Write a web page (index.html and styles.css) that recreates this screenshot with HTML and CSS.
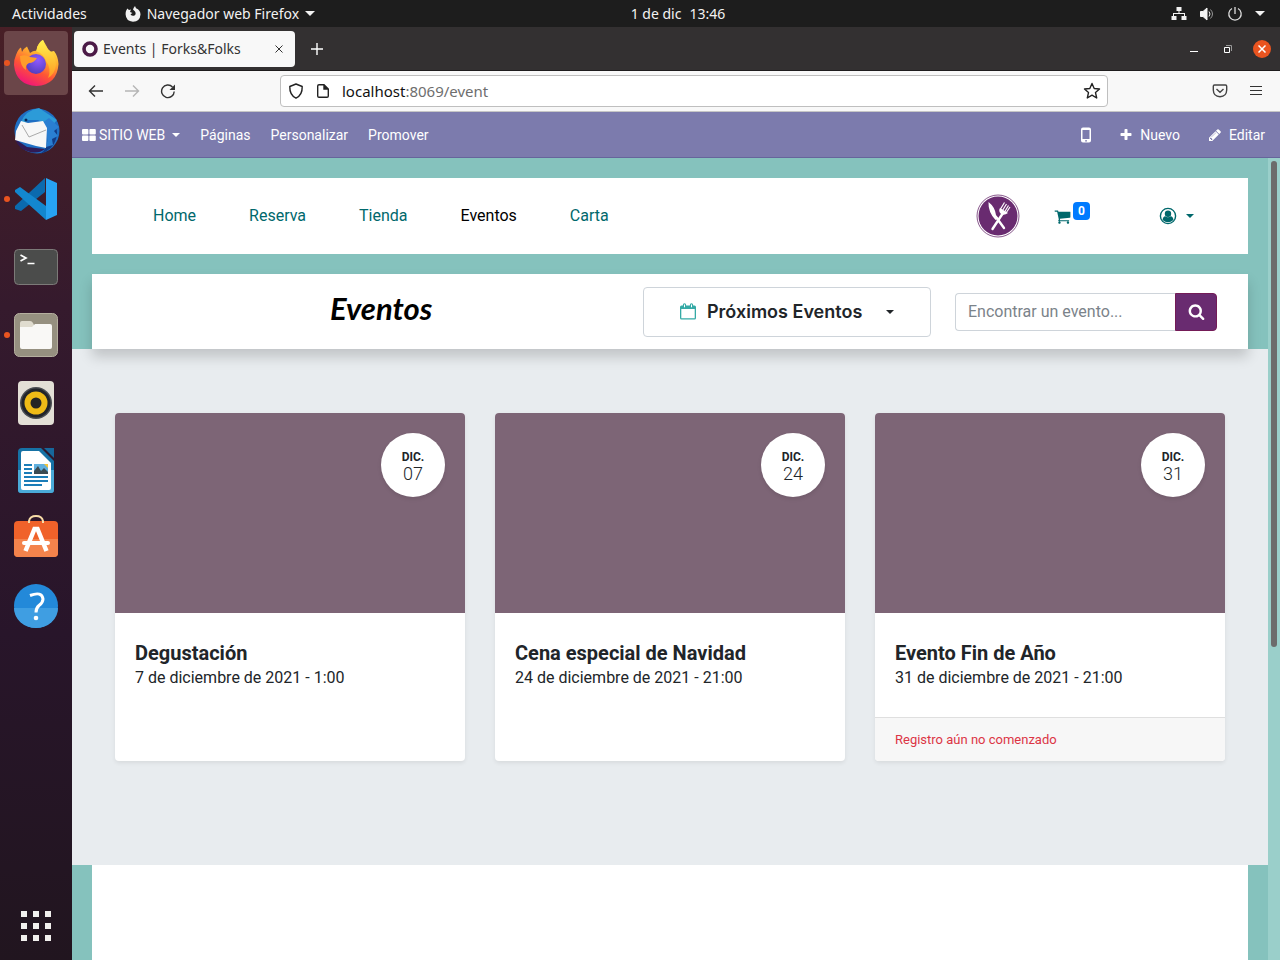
FILE: index.html
```html
<!DOCTYPE html>
<html lang="es">
<head>
<meta charset="utf-8">
<title>Events | Forks&amp;Folks</title>
<link rel="stylesheet" href="styles.css">
</head>
<body>
<header class="topbar">
  <div class="topbar-left">
    <button class="plain">Actividades</button>
    <button class="plain app-menu">
      <svg width="16" height="16" viewBox="0 0 16 16"><path fill="#f2f2f2" d="M1 5L2.300 2.500 4 4 6 3.500 5 6 7.500 7 5.500 8.300Q7 10.500 9.500 9.500 11.500 8 10 5.500L8 3.500Q8.500 1.500 10 0L11 2.300Q15.500 4 15.500 8.500 15 15.500 8 15.700 1 15.300.600 8.500Q.500 6.500 1 5Z"/></svg>
      <span>Navegador web Firefox</span><i class="caret"></i>
    </button>
  </div>
  <div class="clock"><span>1 de dic</span><span>13:46</span></div>
  <div class="tray">
    <svg width="16" height="16" viewBox="0 0 16 16" fill="#f2f2f2"><path d="M5.500 1h5v4h-2v2H14v3h1.500v4h-5v-4H13V8H3v2h2.500v4h-5v-4H2V7h5.500V5h-2z"/></svg>
    <svg width="16" height="16" viewBox="0 0 16 16" fill="none" stroke="#f2f2f2"><path fill="#f2f2f2" d="M1.500 5.500h2.500L8 2v12l-4-3.500H1.500z"/><path d="M10 5.500q2 2.500 0 5"/><path stroke="#999" d="M11.500 3.500q4 4.500 0 9"/></svg>
    <svg width="16" height="16" viewBox="0 0 16 16" fill="none" stroke="#ddd" stroke-width="1.300"><path d="M8 1v7M5 2.500a6.200 6.200 0 1 0 6 0"/></svg>
    <i class="caret"></i>
  </div>
</header>

<div class="desktop">
  <nav class="dock" aria-label="Aplicaciones">
    <button class="app current running" aria-label="Firefox">
      <svg width="48" height="48" viewBox="0 0 48 48">
        <defs>
          <linearGradient id="fx" x1=".8" y1="0" x2=".3" y2="1"><stop offset="0" stop-color="#fff44f"/><stop offset=".35" stop-color="#ffb02e"/><stop offset=".65" stop-color="#ff5634"/><stop offset="1" stop-color="#f0127c"/></linearGradient>
          <radialGradient id="globe" cx=".6" cy=".3" r=".8"><stop offset="0" stop-color="#9059ff"/><stop offset="1" stop-color="#4a3bb8"/></radialGradient>
          <linearGradient id="tail" x1="0" y1="0" x2="0" y2="1"><stop offset="0" stop-color="#fff34d"/><stop offset="1" stop-color="#ff9a22"/></linearGradient>
        </defs>
        <path fill="url(#fx)" d="M4 16Q6 10 9 8.500L10 13Q12 9 15 7.500L18 14Q22 11 25 12L25 8Q28 2 31 1L35 8 37 13 42 12Q46 17 46.500 25 45 46 24.500 47 4 46 2 26 2 20 4 16Z"/>
        <circle cx="24" cy="25" r="10" fill="url(#globe)"/>
        <path fill="url(#tail)" d="M24 12Q26 4 31 1 32 6 36 10 44 16 44 26 43 35 36 39 40 30 34 22 32 15 24 12Z"/>
        <path fill="#ff9d2b" d="M8 17Q14 15 18 18L25 19Q22 24 17 24 13 26 14 31 8 27 8 17Z"/>
      </svg>
    </button>
    <button class="app" aria-label="Thunderbird">
      <svg width="48" height="48" viewBox="0 0 48 48">
        <circle cx="25" cy="24" r="22.500" fill="#1f6fc4"/>
        <path fill="#123a85" d="M36 12Q48 19 44 32 41 43 28 47 35 42 35 35L38 22Z"/>
        <path fill="#2c9bd8" d="M9 15Q14 3 27 1L45 13 39 20 26 13 16 13 9 20Z"/>
        <path fill="#2a7fd2" d="M37 11L47 20 42 24 46 29 40 32 41 38 34 40Q38 27 30 16Z"/>
        <path fill="#301b55" d="M3 32L15 40 33 42Q27 47 18 45 7 43 3 32Z"/>
        <path fill="#f7f7f7" d="M9 14L16 16 31 14 35 21 34 41 24 39 3 33 4 24Z"/>
        <path fill="none" stroke="#aaa" d="M10 18L17 30 34 23"/><circle cx="14" cy="13" r="1.500" fill="#08295a"/>
      </svg>
    </button>
    <button class="app running" aria-label="Visual Studio Code">
      <svg width="48" height="48" viewBox="0 0 48 48">
        <path fill="#0b6aae" d="M3 31L33 3V17L9 36 3 34Z"/>
        <path fill="#1387cf" d="M3 15L8 12 34 31V45L3 17Z"/>
        <path fill="#27a3f3" d="M34 3L45 8V40L34 45Z"/>
      </svg>
    </button>
    <button class="app" aria-label="Terminal">
      <svg width="48" height="48" viewBox="0 0 48 48">
        <rect x="2.500" y="6.500" width="43" height="35" rx="4" fill="#4b4c4b" stroke="#7c7a78"/>
        <path fill="none" stroke="#fff" stroke-width="1.700" d="M8.500 12L14 15 8.500 18M15.500 20.500H22.500"/>
      </svg>
    </button>
    <button class="app running" aria-label="Archivos">
      <svg width="48" height="48" viewBox="0 0 48 48">
        <rect x="2.500" y="2.500" width="43" height="43" rx="5" fill="#969080" stroke="#b5af9f"/>
        <path fill="#e0dccf" d="M8 12q0-2 2-2h8q2 0 3 2l1 2H38v14H8z"/>
        <path fill="#f9f8f6" d="M8 16h12l3-3H38q2 0 2 2V36q0 2-2 2H10q-2 0-2-2z"/>
      </svg>
    </button>
    <button class="app" aria-label="Rhythmbox">
      <svg width="48" height="48" viewBox="0 0 48 48">
        <rect x="6" y="2" width="36" height="44" rx="4" fill="#e3dfd6"/>
        <circle cx="24" cy="24" r="16" fill="#4a4d52"/><circle cx="24" cy="24" r="14.500" fill="#22252a"/>
        <circle cx="24" cy="24" r="11.500" fill="#efbb17"/><circle cx="24" cy="24" r="5.500" fill="#242424"/>
      </svg>
    </button>
    <button class="app" aria-label="LibreOffice Writer">
      <svg width="48" height="48" viewBox="0 0 48 48">
        <path fill="#1672a5" d="M10 1H29L42 14V43q0 3-3 3H9q-3 0-3-3V5q0-4 4-4z"/>
        <path fill="#4aaad8" d="M6 23H42V43q0 3-3 3H9q-3 0-3-3z"/>
        <path fill="#fff" d="M11 4H27L39 16V41q0 2-2 2H11q-2 0-2-2V6q0-2 2-2z"/>
        <path fill="#17679b" d="M32 1H42V11Z"/>
        <path stroke="#1b7db8" stroke-width="2" d="M12 18H20M12 22H20M12 26H20M12 30H36M12 34H36M12 38H30"/>
        <rect x="22" y="17" width="14" height="10" fill="#61b1df"/><path fill="#3c4b52" d="M22 27V24L26 19 29 24 32 21 36 25V27Z"/><path fill="#f3c43b" d="M32 17h4v4z"/>
      </svg>
    </button>
    <button class="app" aria-label="Ubuntu Software">
      <svg width="48" height="48" viewBox="0 0 48 48">
        <rect x="2" y="6" width="44" height="36" rx="4" fill="#f0622a"/><path fill="#f4834c" d="M2 24H46V38q0 4-4 4H6q-4 0-4-4z"/>
        <path fill="none" stroke="#f8dca7" stroke-width="2" d="M17 8V6q1-5 7-5t7 5V8"/>
        <path fill="none" stroke="#fff" stroke-width="4.500" d="M13.500 36L22.500 14h3L34.500 36"/><path stroke="#fff" stroke-width="4" stroke-linecap="round" d="M12 28H36"/>
      </svg>
    </button>
    <button class="app" aria-label="Ayuda">
      <svg width="48" height="48" viewBox="0 0 48 48">
        <circle cx="24" cy="23" r="22" fill="#2389d9"/><path fill="#3f9ee2" d="M2 25H46A22 20 0 0 1 2 25Z"/>
        <path fill="none" stroke="#fff" stroke-width="3" d="M18 12.500Q30 8 31 16 31 19.500 27 22.500 24 25 24 29.500"/><circle cx="24" cy="35" r="2.300" fill="#fff"/>
      </svg>
    </button>
    <button class="app grid-button" aria-label="Mostrar aplicaciones">
      <svg width="48" height="48" viewBox="0 0 48 48"><path stroke="#f2f0ee" stroke-width="6" stroke-dasharray="6" d="M9 12H39M9 24H39M9 36H39"/></svg>
    </button>
  </nav>

  <section class="window">
    <div class="tabs">
      <div class="tab">
        <svg width="16" height="16" viewBox="0 0 16 16"><circle cx="8" cy="8" r="6" fill="none" stroke="#4b1a46" stroke-width="3.600"/></svg>
        <span class="tab-title">Events | Forks&amp;Folks</span>
        <button class="plain" aria-label="Cerrar pestaña"><svg width="8" height="8" viewBox="0 0 8 8" stroke="#333"><path d="M.500.500l7 7M7.500.500l-7 7"/></svg></button>
      </div>
      <button class="plain" aria-label="Nueva pestaña"><svg width="12" height="12" viewBox="0 0 12 12" stroke="#fff" stroke-width="1.400"><path d="M6 0v12M0 6h12"/></svg></button>
      <div class="window-buttons">
        <button class="plain" aria-label="Minimizar"><svg width="8" height="8" viewBox="0 0 8 8"><path stroke="#fff" d="M0 6.500h8"/></svg></button>
        <button class="plain" aria-label="Restaurar"><svg width="8" height="8" viewBox="0 0 8 8" fill="none" stroke="#fff"><path d="M.500 2.500h5v5h-5z"/><path stroke="#999" d="M2 .500h5.500V6"/></svg></button>
        <button class="plain close" aria-label="Cerrar"><svg width="8" height="8" viewBox="0 0 8 8" stroke="#fff" stroke-width="1.500"><path d="M.500.500l7 7M7.500.500l-7 7"/></svg></button>
      </div>
    </div>

    <div class="toolbar">
      <div class="nav-buttons">
        <button class="plain" aria-label="Atrás"><svg width="16" height="16" viewBox="0 0 16 16" fill="none" stroke="#333" stroke-width="1.400"><path d="M15 8H1.500M7 2.500L1.500 8 7 13.500"/></svg></button>
        <button class="plain" aria-label="Adelante"><svg width="16" height="16" viewBox="0 0 16 16" fill="none" stroke="#b5b5b5" stroke-width="1.400"><path d="M1 8h13.500M9 2.500L14.500 8 9 13.500"/></svg></button>
        <button class="plain" aria-label="Recargar"><svg width="16" height="16" viewBox="0 0 16 16" fill="none" stroke="#333" stroke-width="1.400"><path d="M14.200 8.500A6.300 6.300 0 1 1 12.500 4"/><path fill="#333" stroke="none" d="M15 1.500v5.500H9.500z"/></svg></button>
      </div>
      <div class="address">
        <svg width="16" height="16" viewBox="0 0 16 16" fill="none" stroke="#222" stroke-width="1.400"><path stroke-linejoin="round" d="M8 1L14.200 3.500Q14.500 12 8 15.200 1.500 12 1.800 3.500Z"/></svg>
        <svg width="16" height="16" viewBox="0 0 16 16" fill="none" stroke="#222" stroke-width="1.400"><path stroke-linejoin="round" d="M9 1.700H4Q2.700 1.700 2.700 3V13Q2.700 14.300 4 14.300H12Q13.300 14.300 13.300 13V6Z"/><path fill="#222" d="M9 1.700V6H13"/></svg>
        <span class="url">localhost<span class="muted">:8069/event</span></span>
        <svg width="18" height="18" viewBox="0 0 18 18" fill="none" stroke="#222" stroke-width="1.400" stroke-linejoin="round"><path d="M9 1.500L11.200 6.500 16.500 7 12.500 10.600 13.700 16 9 13.200 4.300 16 5.500 10.600 1.500 7 6.800 6.500Z"/></svg>
      </div>
      <div class="toolbar-end">
        <button class="plain" aria-label="Pocket"><svg width="16" height="16" viewBox="0 0 16 16" fill="none" stroke="#444" stroke-width="1.400"><path d="M2.500 2H13.500Q14.700 2 14.700 3.300V7Q14.500 13.500 8 13.700 1.500 13.500 1.300 7V3.300Q1.300 2 2.500 2ZM4.500 6L8 9.300 11.500 6"/></svg></button>
        <button class="plain" aria-label="Menú"><svg width="16" height="16" viewBox="0 0 16 16" stroke="#333"><path d="M2 3.500h12M2 7.500h12M2 11.500h12"/></svg></button>
      </div>
    </div>

    <nav class="editor-bar">
      <button class="plain site"><svg width="14" height="12" viewBox="0 0 14 12" fill="#fff"><rect width="6.400" height="5.500" rx="1"/><rect x="7.400" width="6.400" height="5.500" rx="1"/><rect y="6.400" width="6.400" height="5.500" rx="1"/><rect x="7.400" y="6.400" width="6.400" height="5.500" rx="1"/></svg><span>SITIO WEB</span><i class="caret small"></i></button>
      <a href="#">Páginas</a>
      <a href="#">Personalizar</a>
      <a href="#">Promover</a>
      <div class="editor-actions">
        <button class="plain" aria-label="Vista móvil"><svg width="10" height="16" viewBox="0 0 10 16"><path fill="#fff" fill-rule="evenodd" d="M2 .500h6q2 0 2 2v11q0 2-2 2H2q-2 0-2-2v-11q0-2 2-2zM1.500 3v9h7V3zM5 13a.8.800 0 1 0 .1 0z"/></svg></button>
        <button class="plain icon-text"><svg width="14" height="14" viewBox="0 0 1792 1792" fill="#fff"><path d="M1600 736v192q0 40-28 68t-68 28h-416v416q0 40-28 68t-68 28h-192q-40 0-68-28t-28-68v-416h-416q-40 0-68-28t-28-68v-192q0-40 28-68t68-28h416v-416q0-40 28-68t68-28h192q40 0 68 28t28 68v416h416q40 0 68 28t28 68z"/></svg>Nuevo</button>
        <button class="plain icon-text"><svg width="14" height="14" viewBox="0 0 1792 1792" fill="#fff"><path d="M491 1536l91-91-235-235-91 91v107h128v128h107zm523-928q0-22-22-22-10 0-17 7l-542 542q-7 7-7 17 0 22 22 22 10 0 17-7l542-542q7-7 7-17zm-54-192l416 416-832 832h-416v-416zm683 96q0 53-37 90l-166 166-416-416 166-165q36-38 90-38 53 0 91 38l235 234q37 39 37 91z"/></svg>Editar</button>
      </div>
    </nav>

    <div class="viewport">
      <main class="page">
        <header class="site-header">
          <nav class="site-nav">
            <a href="#">Home</a><a href="#">Reserva</a><a href="#">Tienda</a><a href="#" class="active">Eventos</a><a href="#">Carta</a>
          </nav>
          <a href="#" class="logo" aria-label="Forks&amp;Folks">
            <svg width="44" height="44" viewBox="0 0 44 44">
              <circle cx="22" cy="22" r="21" fill="#fff" stroke="#8a5a8e"/><circle cx="22" cy="22" r="19.500" fill="#692b70"/>
              <path stroke="#fff" stroke-width="2.400" stroke-linecap="round" d="M16.500 35L27 19M28 34L20 23"/>
              <path fill="#fff" d="M12.500 8Q19 13 20 21L22 24 19.500 26Q12 18 12.500 8Z"/>
              <path fill="none" stroke="#fff" stroke-width="1.200" d="M28.500 8.500L24.500 15M30.500 10L26.500 16.500M32.500 11.500L28.500 18M34 13L30 19"/>
              <path fill="#fff" d="M24 14L32 19Q28 22 25 20 22 17 24 14Z"/>
            </svg>
          </a>
          <a href="#" class="cart" aria-label="Carrito">
            <svg width="17" height="17" viewBox="0 0 1792 1792" fill="#00686c"><path d="M704 1536q0 52-38 90t-90 38-90-38-38-90 38-90 90-38 90 38 38 90zm896 0q0 52-38 90t-90 38-90-38-38-90 38-90 90-38 90 38 38 90zm128-1088v512q0 24-16.500 42.500t-40.500 21.500l-1044 122q13 60 13 70 0 16-24 64h920q26 0 45 19t19 45-19 45-45 19h-1024q-26 0-45-19t-19-45q0-11 8-31.500t16-36 21.500-40 15.500-29.500l-177-823h-204q-26 0-45-19t-19-45 19-45 45-19h256q16 0 28.500 6.500t19.500 15.500 13 24.500 8 26 5.500 29.500 4.500 26h1201q26 0 45 19t19 45z"/></svg>
            <span class="badge">0</span>
          </a>
          <button class="plain user" aria-label="Usuario">
            <svg width="18" height="18" viewBox="0 0 18 18"><circle cx="9" cy="9" r="7.600" fill="none" stroke="#00686c" stroke-width="1.400"/><circle cx="9" cy="6.800" r="3.200" fill="#00686c"/><path fill="#00686c" d="M3.500 13Q4 9.500 6.300 9.200 9 11.500 11.700 9.200 14 9.500 14.500 13 9 17.500 3.500 13Z"/></svg>
            <i class="caret small"></i>
          </button>
        </header>

        <div class="events-bar">
          <h1>Eventos</h1>
          <button class="filter">
            <svg width="16" height="17" viewBox="0 0 16 17"><path fill="#35aaa6" fill-rule="evenodd" d="M1.500 2.500H2.800Q2.800.300 4.500.300T6.200 2.500H9.800Q9.800.300 11.500.300T13.200 2.500H14.500Q16 2.500 16 4V15Q16 16.500 14.500 16.500H1.500Q0 16.500 0 15V4Q0 2.500 1.500 2.500ZM1.300 6V15.200H14.700V6ZM4 1.500V4.300H5V1.500ZM11 1.500V4.300H12V1.500Z"/></svg>
            <span>Próximos Eventos</span><i class="caret small"></i>
          </button>
          <form class="search">
            <input type="text" placeholder="Encontrar un evento..." aria-label="Encontrar un evento">
            <button type="button" aria-label="Buscar"><svg width="17" height="17" viewBox="0 0 1792 1792" fill="#fff"><path d="M1216 832q0-185-131.500-316.500t-316.500-131.500-316.500 131.500-131.500 316.500 131.500 316.500 316.500 131.500 316.500-131.500 131.500-316.500zm512 832q0 52-38 90t-90 38q-54 0-90-38l-343-342q-179 124-399 124-143 0-273.500-55.500t-225-150-150-225-55.500-273.500 55.500-273.500 150-225 225-150 273.500-55.500 273.500 55.500 225 150 150 225 55.500 273.500q0 220-124 399l343 343q37 37 37 90z"/></svg></button>
          </form>
        </div>

        <section class="events">
          <article class="card">
            <div class="cover"><time class="date"><b>DIC.</b><span>07</span></time></div>
            <div class="card-body"><h2>Degustación</h2><p>7 de diciembre de 2021 - 1:00</p></div>
          </article>
          <article class="card">
            <div class="cover"><time class="date"><b>DIC.</b><span>24</span></time></div>
            <div class="card-body"><h2>Cena especial de Navidad</h2><p>24 de diciembre de 2021 - 21:00</p></div>
          </article>
          <article class="card">
            <div class="cover"><time class="date"><b>DIC.</b><span>31</span></time></div>
            <div class="card-body"><h2>Evento Fin de Año</h2><p>31 de diciembre de 2021 - 21:00</p></div>
            <footer>Registro aún no comenzado</footer>
          </article>
        </section>
        <div class="page-rest"></div>
      </main>
      <div class="scrollbar"><div class="thumb"></div></div>
    </div>
  </section>
</div>
</body>
</html>
```
FILE: styles.css
```css
* { box-sizing: border-box; }
body {
  margin: 0;
  height: 100vh;
  display: flex;
  flex-direction: column;
  overflow: hidden;
  font-family: Roboto, "Liberation Sans", sans-serif;
  font-size: 16px;
  line-height: 24px;
  color: #212529;
}
a { color: inherit; text-decoration: none; }
svg { display: block; flex: none; }
h1, h2, p { margin: 0; }
button { font: inherit; color: inherit; cursor: pointer; }
.plain { display: flex; align-items: center; padding: 0; border: 0; background: none; }
.caret {
  flex: none;
  border: 5px solid transparent;
  border-top-color: currentColor;
  border-bottom: 0;
}
.caret.small { border-width: 4px; border-bottom: 0; }

/* Desktop top bar */
.topbar {
  display: grid;
  grid-template-columns: 1fr auto 1fr;
  align-items: center;
  height: 27px;
  flex: none;
  padding: 0 15px 0 12px;
  background: #1d1d1d;
  color: #f2f2f2;
  font-family: "Noto Sans", sans-serif;
  font-size: 14px;
}
.topbar-left { display: flex; gap: 38px; }
.app-menu { gap: 6px; }
.clock { display: flex; gap: 8px; padding-left: 79px; }
.tray { display: flex; justify-content: flex-end; align-items: center; gap: 12px; }
.desktop { display: flex; flex: 1; min-height: 0; }

/* Dock */
.dock {
  display: flex;
  flex-direction: column;
  gap: 4px;
  flex: none;
  width: 72px;
  padding: 4px 4px 2px;
  background: linear-gradient(#481f26, #351a2d 30%, #28152a 65%, #21151f);
}
.app {
  display: flex;
  align-items: center;
  justify-content: center;
  position: relative;
  height: 64px;
  padding: 0;
  border: 0;
  border-radius: 4px;
  background: none;
}
.app.current { background: #6b4649; }
.app.running::before {
  content: "";
  position: absolute;
  left: 0;
  top: 29px;
  width: 6px;
  height: 6px;
  border-radius: 50%;
  background: #e95420;
}
.grid-button { margin-top: auto; }

/* Browser window */
.window { display: flex; flex-direction: column; flex: 1; min-width: 0; }
.tabs {
  display: flex;
  align-items: center;
  gap: 16px;
  height: 44px;
  flex: none;
  padding: 0 9px 0 2px;
  background: #333031;
  border-bottom: 1px solid #1e1c1d;
}
.tab {
  display: flex;
  align-items: center;
  gap: 5px;
  width: 221px;
  height: 36px;
  padding: 0 12px 0 8px;
  border-radius: 4px;
  background: #f8f8f8;
  color: #333;
  font-family: "Noto Sans", sans-serif;
  font-size: 14px;
}
.tab-title { flex: 1; }
.window-buttons { display: flex; align-items: center; gap: 26px; margin-left: auto; }
.close { justify-content: center; width: 18px; height: 18px; margin-left: -5px; border-radius: 50%; background: #e95420; }
.toolbar {
  display: grid;
  grid-template-columns: 208px minmax(0, 828px) 1fr;
  align-items: center;
  height: 41px;
  flex: none;
  background: #f8f8f8;
  border-bottom: 1px solid #c6c6c6;
}
.nav-buttons { display: flex; gap: 20px; padding-left: 16px; }
.address {
  display: flex;
  align-items: center;
  gap: 11px;
  height: 32px;
  padding: 0 6px 0 7px;
  border: 1px solid #bfbfbf;
  border-radius: 4px;
  background: #fff;
}
.url { flex: 1; color: #111; font-family: "Noto Sans", sans-serif; font-size: 15px; }
.muted { color: #6e6e6e; }
.toolbar-end { display: flex; justify-content: flex-end; gap: 20px; padding-right: 16px; }

/* Website editor bar */
.editor-bar {
  display: flex;
  align-items: center;
  gap: 20px;
  height: 46px;
  flex: none;
  padding: 0 15px 0 10px;
  background: #7c7bad;
  border-bottom: 1px solid #66659b;
  color: #fff;
  font-size: 14px;
}
.site { gap: 3px; }
.site .caret { margin-left: 4px; }
.editor-actions { display: flex; gap: 28px; margin-left: auto; }
.icon-text { gap: 7px; }

/* Page */
.viewport { display: flex; flex: 1; min-height: 0; }
.page { display: flex; flex-direction: column; flex: 1; min-width: 0; padding-top: 20px; background: #85c2bd; }
.site-header {
  display: flex;
  align-items: center;
  flex: none;
  margin: 0 20px 20px;
  padding: 16px 54px 16px 61px;
  background: #fff;
  color: #00686c;
}
.site-nav { display: flex; gap: 53px; }
.site-nav .active { color: #000; }
.logo { margin-left: auto; }
.cart { display: flex; align-items: center; gap: 2px; margin-left: 34px; }
.badge {
  margin-bottom: 10px;
  padding: 0 5px;
  border-radius: 4px;
  background: #007bff;
  color: #fff;
  font-size: 12px;
  font-weight: 700;
  line-height: 18px;
}
.user { gap: 9px; margin-left: 69px; }
.events-bar {
  display: flex;
  align-items: center;
  gap: 24px;
  position: relative;
  z-index: 1;
  flex: none;
  min-height: 75px;
  margin: 0 20px;
  padding: 0 31px 0 238px;
  background: #fff;
  box-shadow: 0 8px 12px rgba(0, 0, 0, .17);
}
.events-bar h1 {
  flex: 1;
  padding-bottom: 8px;
  color: #000;
  font-family: Lato, sans-serif;
  font-size: 31px;
  font-style: italic;
  font-weight: 700;
  line-height: 40px;
}
.filter {
  display: flex;
  align-items: center;
  gap: 11px;
  width: 288px;
  height: 50px;
  padding: 0 36px;
  border: 1px solid #ced4da;
  border-radius: 4px;
  background: #fff;
  font-family: Inter, sans-serif;
  font-size: 18px;
  font-weight: 600;
}
.filter .caret { margin-left: auto; }
.search { display: flex; width: 262px; height: 38px; }
.search input {
  flex: 1;
  min-width: 0;
  padding: 0 12px;
  border: 1px solid #ced4da;
  border-right: 0;
  border-radius: 4px 0 0 4px;
  font: inherit;
}
.search input::placeholder { color: #7b838a; opacity: 1; }
.search button {
  display: flex;
  align-items: center;
  justify-content: center;
  width: 42px;
  padding: 0;
  border: 1px solid #741b57;
  border-radius: 0 4px 4px 0;
  background: #692b70;
}

/* Event cards */
.events {
  display: grid;
  grid-template-columns: repeat(3, minmax(0, 1fr));
  gap: 30px;
  flex: none;
  padding: 64px 43px 104px;
  background: #e8ecef;
}
.card {
  display: flex;
  flex-direction: column;
  overflow: hidden;
  border-radius: 4px;
  background: #fff;
  box-shadow: 0 2px 4px rgba(0, 0, 0, .075);
}
.cover { display: flex; justify-content: flex-end; align-items: flex-start; height: 200px; padding: 20px; background: #7d6576; }
.date {
  display: flex;
  flex-direction: column;
  justify-content: center;
  align-items: center;
  width: 64px;
  height: 64px;
  padding-top: 2px;
  border-radius: 50%;
  background: #fff;
  box-shadow: 0 2px 4px rgba(0, 0, 0, .1);
  font-size: 12px;
  line-height: 16px;
}
.date span { font-size: 18px; font-weight: 300; line-height: 18px; }
.card-body { flex: 1; padding: 28px 20px 26px; }
.card h2 { font-size: 20px; font-weight: 700; line-height: 24px; }
.card p { line-height: 26px; }
.card footer {
  padding: 10px 20px 9px;
  border-top: 1px solid #dfdfdf;
  background: #f7f7f7;
  color: #dc3545;
  font-size: 13px;
}
.page-rest { flex: 1; margin: 0 20px; background: #fff; }
.scrollbar { flex: none; width: 12px; padding: 3px; background: #9acfca; }
.thumb { height: 61%; border-radius: 3px; background: #6c6c6c; }
```
